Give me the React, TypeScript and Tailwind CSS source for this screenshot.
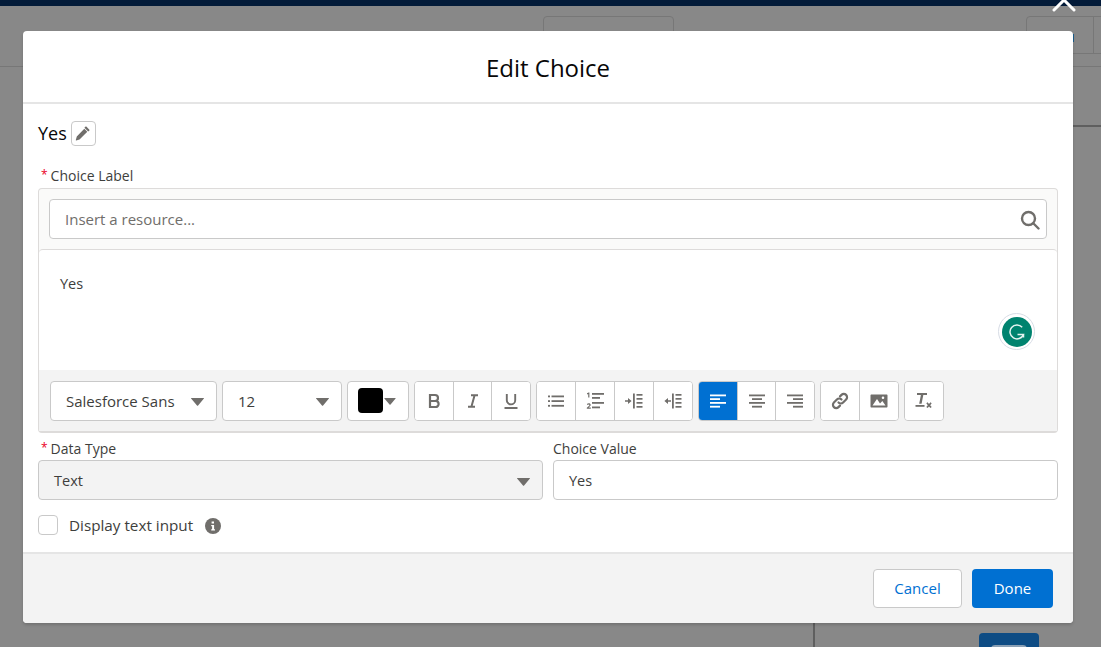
import type { ReactNode } from 'react'

const FONT = { fontFamily: '"Open Sans", "Noto Sans", sans-serif' }

function Caret({ className = 'mt-[2px] h-[8px] w-[13px]' }: { className?: string }) {
  return (
    <svg viewBox="0 0 13 8" className={className} fill="#706e6b">
      <path d="M0.3 0h12.4c.3 0 .4.3.2.5L6.9 7.7c-.2.2-.5.2-.7 0L.1.5C-.1.3 0 0 .3 0z" />
    </svg>
  )
}

function ToolButton({ children, active = false }: { children: ReactNode; active?: boolean }) {
  return (
    <div
      className={`flex h-full flex-1 items-center justify-center border-r border-[#c9c9c9] pt-[1px] last:border-r-0 ${
        active ? 'bg-[#0070d2]' : 'bg-white'
      }`}
    >
      {children}
    </div>
  )
}

function ToolGroup({ children, className }: { children: ReactNode; className: string }) {
  return <div className={`flex h-[40px] overflow-hidden rounded border border-[#c9c9c9] bg-white ${className}`}>{children}</div>
}

function Lines({ rows, color = '#706e6b' }: { rows: [number, number, number][]; color?: string }) {
  return (
    <svg viewBox="0 0 16 16" className="h-[16px] w-[16px]" fill={color}>
      {rows.map(([x, y, w]) => (
        <rect key={`${x}-${y}`} x={x} y={y} width={w} height="1.8" />
      ))}
    </svg>
  )
}

function FieldLabel({ children, required = false }: { children: ReactNode; required?: boolean }) {
  return (
    <div className={`flex h-[22px] items-center pb-[2px] text-[14px] text-[#3e3e3c] ${required ? 'pl-[3px]' : ''}`}>
      {required && <span className="mr-[3px] text-[12px] text-[#ea001e]">*</span>}
      {children}
    </div>
  )
}

export default function App() {
  return (
    <div className="relative h-[647px] w-[1101px] overflow-hidden bg-[#888888]" style={FONT}>
      {/* page behind the overlay */}
      <div className="h-[6px] bg-[#031b39]" />
      <div className="absolute left-[543px] top-[16px] h-[40px] w-[131px] rounded border border-[#777777]" />
      <div className="absolute left-[1026px] top-[16px] h-[38px] w-[90px] rounded border border-[#777777]">
        <div className="ml-[66px] h-full w-px bg-[#777777]" />
      </div>
      <div className="absolute left-0 right-0 top-[66px] h-px bg-[#777777]" />
      <div className="absolute left-[1073px] right-0 top-[125px] h-[2px] bg-[#5f5f5f]" />
      <div className="absolute left-[1073px] top-[34px] h-[8px] w-px bg-[#1b5e8c]" />
      <div className="absolute bottom-0 left-[813px] top-[600px] w-[2px] bg-[#5f5f5f]" />
      <div className="absolute left-[979px] top-[633px] h-[30px] w-[60px] rounded bg-[#0e4c84]">
        <div className="mx-auto mt-[12px] h-[10px] w-[36px] rounded-sm bg-[#8aa0b5]" />
      </div>

      {/* close */}
      <svg viewBox="0 0 24 24" className="absolute left-[1052px] top-[-12px] h-[24px] w-[24px]" fill="none" stroke="#ffffff" strokeWidth="3" strokeLinecap="round">
        <path d="M2 2l20 20M22 2L2 22" />
      </svg>

      {/* modal */}
      <div className="absolute inset-0 px-[23px] pb-[24px] pt-[31px]">
        <div className="flex h-full w-[1050px] flex-col overflow-hidden rounded bg-white shadow-[0_2px_3px_rgba(0,0,0,0.16)]">
          <header className="flex h-[73px] shrink-0 items-center justify-center border-b-2 border-[#e5e5e5] pt-[2px]">
            <h1 className="text-[24px] font-normal leading-none text-[#080707]">Edit Choice</h1>
          </header>

          <main className="flex-1 px-[15px]">
            <div className="mt-[16px] flex h-[26px] items-center gap-[4px]">
              <span className="text-[18px] text-[#080707]">Yes</span>
              <div className="flex h-[25px] w-[25px] items-center justify-center rounded border border-[#c9c9c9]">
                <svg viewBox="0 0 16 16" className="h-[16px] w-[16px]" fill="#706e6b">
                  <path d="M11.3 1.6l3.1 3.1c.2.2.2.5 0 .7l-1.2 1.2-3.8-3.8 1.2-1.2c.2-.2.5-.2.7 0zM9.3 3.7l3 3-7.8 7.7-3.3 1c-.3.1-.5-.1-.4-.4l1-3.4 7.5-7.9z" />
                </svg>
              </div>
            </div>

            <div className="mb-[1px] mt-[19px]">
              <FieldLabel required>Choice Label</FieldLabel>
            </div>
            <div className="rounded border border-b-2 border-[#dddbda] bg-[#fafaf9]">
              <div className="px-[10px] py-[10px]">
                <div className="flex h-[40px] items-center justify-between rounded border border-[#c9c9c9] bg-white pl-[15px] pr-[6px]">
                  <span className="text-[15px] text-[#706e6b]">Insert a resource...</span>
                  <svg viewBox="0 0 20 20" className="mt-[2px] h-[20px] w-[20px]" fill="none" stroke="#706e6b" strokeWidth="2.4" strokeLinecap="round">
                    <circle cx="8.5" cy="8.5" r="6.5" />
                    <path d="M13.5 13.5L18.5 18.5" />
                  </svg>
                </div>
              </div>
              <div className="flex h-[121px] items-start justify-between rounded-t border-t border-[#dddbda] bg-white pl-[21px] pr-[22px]">
                <span className="mt-[23px] text-[14.5px] text-[#3e3e3c]">Yes</span>
                <div className="mt-[63px] flex h-[37px] w-[37px] items-center justify-center rounded-full border border-[#d8dde6] bg-white">
                  <div className="flex h-[30px] w-[30px] items-center justify-center rounded-full bg-[#00836f]">
                    <svg viewBox="0 0 20 20" className="h-[20px] w-[20px]" fill="none" stroke="#e4f3f0" strokeWidth="1.5">
                      <path d="M15.2 5.2A7 7 0 1 0 16.5 12.5H10.5M16.5 12.5v3" />
                    </svg>
                  </div>
                </div>
              </div>
              <div className="flex h-[61px] items-center gap-[5px] bg-[#f3f3f3] px-[11px]">
                <div className="flex h-[40px] w-[167px] items-center justify-between rounded border border-[#c9c9c9] bg-white pl-[15px] pr-[12px] pt-[1px]">
                  <span className="text-[15px] text-[#3e3e3c]">Salesforce Sans</span>
                  <Caret />
                </div>
                <div className="flex h-[40px] w-[120px] items-center justify-between rounded border border-[#c9c9c9] bg-white pl-[15px] pr-[12px] pt-[1px]">
                  <span className="text-[15px] text-[#3e3e3c]">12</span>
                  <Caret />
                </div>
                <div className="flex h-[40px] w-[62px] items-center rounded border border-[#c9c9c9] bg-white pl-[10px]">
                  <div className="h-[25px] w-[25px] rounded-sm bg-black" />
                  <Caret className="ml-[1px] mt-[2px] h-[7px] w-[12px]" />
                </div>

                <ToolGroup className="w-[117px]">
                  <ToolButton>
                    <svg viewBox="0 0 16 16" className="h-[16px] w-[16px]" fill="none" stroke="#706e6b" strokeWidth="2.2">
                      <path d="M4 2h5a3 3 0 0 1 0 6H4zM4 8h5.6a3 3 0 0 1 0 6H4zM4 1v14" />
                    </svg>
                  </ToolButton>
                  <ToolButton>
                    <svg viewBox="0 0 16 16" className="h-[16px] w-[16px]" fill="none" stroke="#706e6b" strokeWidth="2">
                      <path d="M6 2.2h7M3 13.8h7M9.6 2.2L6.4 13.8" />
                    </svg>
                  </ToolButton>
                  <ToolButton>
                    <svg viewBox="0 0 16 16" className="h-[16px] w-[16px]" fill="none" stroke="#706e6b" strokeWidth="1.9">
                      <path d="M3.8 1v6.2a4.2 4.2 0 0 0 8.4 0V1M1.5 15h13" />
                    </svg>
                  </ToolButton>
                </ToolGroup>

                <ToolGroup className="w-[157px]">
                  <ToolButton>
                    <svg viewBox="0 0 16 16" className="h-[16px] w-[16px]" fill="#706e6b">
                      <rect x="0" y="2.5" width="2" height="1.8" />
                      <rect x="0" y="7.2" width="2" height="1.8" />
                      <rect x="0" y="11.9" width="2" height="1.8" />
                      <rect x="3.5" y="2.5" width="12.5" height="1.8" />
                      <rect x="3.5" y="7.2" width="12.5" height="1.8" />
                      <rect x="3.5" y="11.9" width="12.5" height="1.8" />
                    </svg>
                  </ToolButton>
                  <ToolButton>
                    <svg viewBox="0 0 18 18" className="h-[18px] w-[18px]" fill="#706e6b">
                      <path d="M1 1.2l1.6-.7h.8v5H2.2V2L1 2.4zM.8 16.8v-1l2-1.9c.5-.5.6-.7.6-1 0-.3-.3-.5-.7-.5-.4 0-.9.2-1.3.5l-.5-.9c.5-.4 1.2-.7 1.9-.7 1.1 0 1.9.6 1.9 1.6 0 .6-.3 1.1-1 1.7l-1 .9h2.1v1.3z" />
                      <rect x="6" y="1" width="12" height="1.8" />
                      <rect x="6" y="5" width="8" height="1.8" />
                      <rect x="6" y="10" width="12" height="1.8" />
                      <rect x="6" y="14.5" width="8" height="1.8" />
                    </svg>
                  </ToolButton>
                  <ToolButton>
                    <svg viewBox="0 0 18 18" className="h-[18px] w-[18px]" fill="#706e6b">
                      <path d="M0 8.2h3V6l3.6 3-3.6 3V9.8H0z" />
                      <rect x="8" y="1.5" width="1.8" height="15" />
                      <rect x="11.5" y="2" width="6" height="1.7" />
                      <rect x="11.5" y="6" width="6" height="1.7" />
                      <rect x="11.5" y="10" width="6" height="1.7" />
                      <rect x="11.5" y="14" width="6" height="1.7" />
                    </svg>
                  </ToolButton>
                  <ToolButton>
                    <svg viewBox="0 0 18 18" className="h-[18px] w-[18px]" fill="#706e6b">
                      <path d="M7 8.2H4V6L.4 9 4 12V9.8h3z" />
                      <rect x="8" y="1.5" width="1.8" height="15" />
                      <rect x="11.5" y="2" width="6" height="1.7" />
                      <rect x="11.5" y="6" width="6" height="1.7" />
                      <rect x="11.5" y="10" width="6" height="1.7" />
                      <rect x="11.5" y="14" width="6" height="1.7" />
                    </svg>
                  </ToolButton>
                </ToolGroup>

                <ToolGroup className="w-[117px]">
                  <ToolButton active>
                    <Lines color="#ffffff" rows={[[0, 1.5, 16], [0, 5.2, 10], [0, 9, 16], [0, 12.8, 10]]} />
                  </ToolButton>
                  <ToolButton>
                    <Lines rows={[[0, 1.5, 16], [3, 5.2, 10], [0, 9, 16], [3, 12.8, 10]]} />
                  </ToolButton>
                  <ToolButton>
                    <Lines rows={[[0, 1.5, 16], [6, 5.2, 10], [0, 9, 16], [6, 12.8, 10]]} />
                  </ToolButton>
                </ToolGroup>

                <ToolGroup className="w-[79px]">
                  <ToolButton>
                    <svg viewBox="0 0 18 18" className="h-[18px] w-[18px]" fill="none" stroke="#706e6b" strokeWidth="2.2" strokeLinecap="round">
                      <path d="M7.5 10.5a3.2 3.2 0 0 0 4.6 0l3-3a3.2 3.2 0 0 0-4.6-4.6L9 4.4" />
                      <path d="M10.5 7.5a3.2 3.2 0 0 0-4.6 0l-3 3a3.2 3.2 0 0 0 4.6 4.6L9 13.6" />
                    </svg>
                  </ToolButton>
                  <ToolButton>
                    <svg viewBox="0 0 18 18" className="h-[18px] w-[18px]" fill="#706e6b">
                      <path fillRule="evenodd" d="M1.5 2.5h15c.6 0 1 .4 1 1v11c0 .6-.4 1-1 1h-15c-.6 0-1-.4-1-1v-11c0-.6.4-1 1-1zM13 4.5a1.3 1.3 0 1 0 0 2.6 1.3 1.3 0 0 0 0-2.6zM2.5 13.5h13l-3.2-4.4-2.3 2.4-3-4.5z" />
                    </svg>
                  </ToolButton>
                </ToolGroup>

                <ToolGroup className="w-[40px]">
                  <ToolButton>
                    <svg viewBox="0 0 18 18" className="h-[18px] w-[18px]" fill="#706e6b">
                      <rect x="2" y="1" width="10" height="2" />
                      <path d="M6 2.5h2.4L6.6 11.8H4.2z" />
                      <rect x="0.5" y="13" width="9" height="1.8" />
                      <path d="M11.3 11.3l1.3-1 1.4 1.6 1.4-1.6 1.3 1-1.5 1.9 1.5 1.9-1.3 1-1.4-1.6-1.4 1.6-1.3-1 1.5-1.9z" />
                    </svg>
                  </ToolButton>
                </ToolGroup>
              </div>
            </div>

            <div className="mt-[5px] grid grid-cols-2 gap-[10px]">
              <div>
                <FieldLabel required>Data Type</FieldLabel>
                <div className="flex h-[40px] items-center justify-between rounded border border-[#c9c9c9] bg-[#f3f3f3] pl-[15px] pr-[12px] pt-[1px]">
                  <span className="text-[14.5px] text-[#3e3e3c]">Text</span>
                  <Caret />
                </div>
              </div>
              <div>
                <FieldLabel>Choice Value</FieldLabel>
                <div className="flex h-[40px] items-center rounded border border-[#c9c9c9] bg-white pl-[15px] pt-[1px]">
                  <span className="text-[14.5px] text-[#3e3e3c]">Yes</span>
                </div>
              </div>
            </div>

            <div className="mt-[14px] flex items-center">
              <div className="h-[20px] w-[20px] rounded-sm border border-[#c9c9c9] bg-white" />
              <span className="ml-[11px] text-[15.25px] text-[#3e3e3c]">Display text input</span>
              <svg viewBox="0 0 16 16" className="ml-[12px] mt-[2px] h-[16px] w-[16px]">
                <circle cx="8" cy="8" r="8" fill="#706e6b" />
                <path d="M6.6 3.6h2.4v2H6.6zM6.2 7h2.9v4.2h.9v1.3H6.2v-1.3h.9V8.3h-.9z" fill="#ffffff" />
              </svg>
            </div>
          </main>

          <footer className="flex h-[71px] shrink-0 items-center justify-end gap-[10px] border-t-2 border-[#e5e5e5] bg-[#f3f3f3] pr-[20px]">
            <button type="button" className="h-[39px] w-[89px] rounded border border-[#c9c9c9] bg-white text-[15px] text-[#0070d2]">
              Cancel
            </button>
            <button type="button" className="h-[39px] w-[81px] rounded bg-[#0070d2] text-[15px] text-white">
              Done
            </button>
          </footer>
        </div>
      </div>
    </div>
  )
}
